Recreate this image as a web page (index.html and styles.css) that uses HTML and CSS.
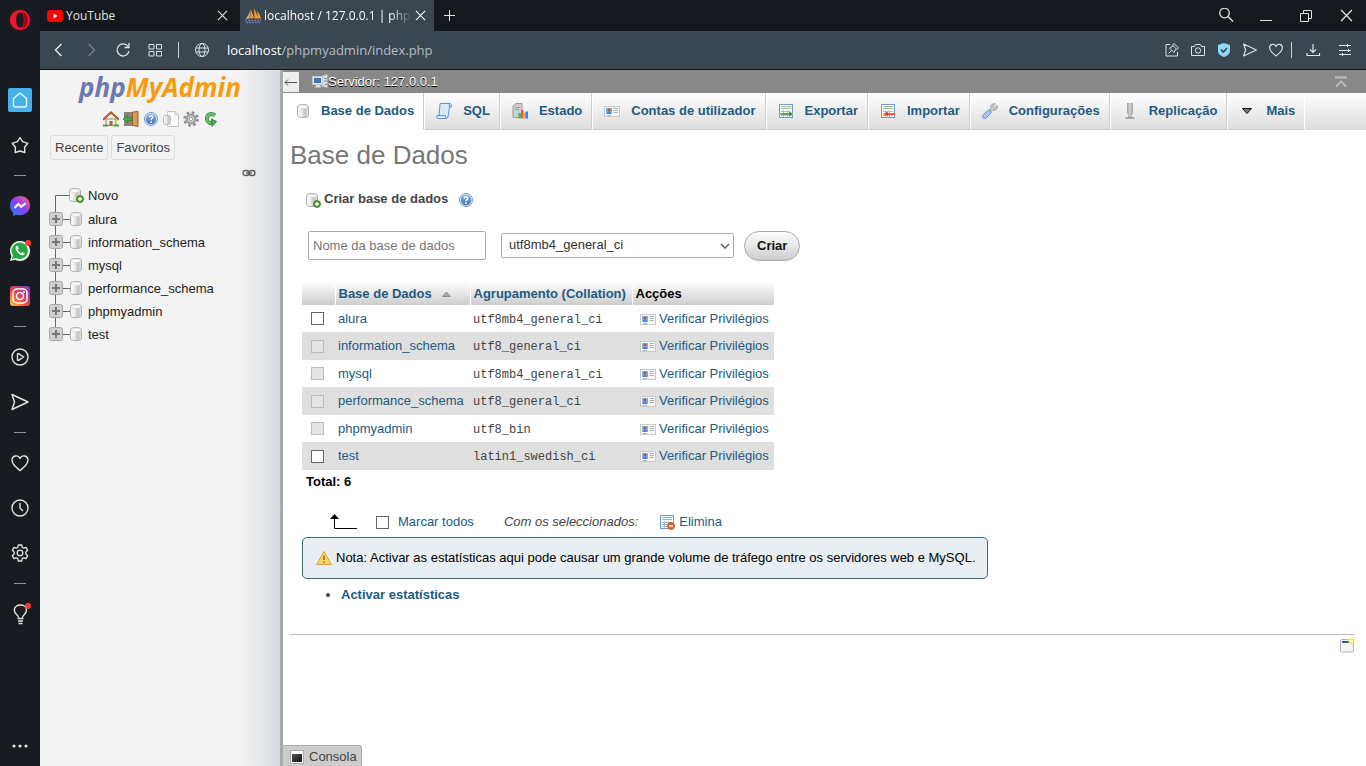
FILE: index.html
```html
<!DOCTYPE html>
<html lang="pt">
<head>
<meta charset="utf-8">
<title>localhost / 127.0.0.1 | phpMyAdmin</title>
<link rel="stylesheet" href="styles.css">
</head>
<body>
<svg class="defs" aria-hidden="true">
  <defs>
    <linearGradient id="g-db" x1="0" x2="1" y1="0" y2="0"><stop offset="0" stop-color="#fff"/><stop offset=".35" stop-color="#eee"/><stop offset=".7" stop-color="#c2c2c2"/><stop offset="1" stop-color="#e6e6e6"/></linearGradient>
    <linearGradient id="g-help" x1="0" x2="0" y1="0" y2="1"><stop offset="0" stop-color="#8ab0de"/><stop offset="1" stop-color="#3f74b8"/></linearGradient>
    <linearGradient id="g-msg" x1="0" x2="1" y1="1" y2="0"><stop offset="0" stop-color="#0a90ff"/><stop offset=".5" stop-color="#8a3cf5"/><stop offset="1" stop-color="#ff6a70"/></linearGradient>
    <linearGradient id="g-ig" x1="0" x2="1" y1="1" y2="0"><stop offset="0" stop-color="#ffc94d"/><stop offset=".4" stop-color="#f4503c"/><stop offset=".7" stop-color="#c72e93"/><stop offset="1" stop-color="#5a48d8"/></linearGradient>
    <linearGradient id="g-con" x1="0" x2="1" y1="0" y2="1"><stop offset="0" stop-color="#555"/><stop offset="1" stop-color="#111"/></linearGradient>
    <symbol id="i-db" viewBox="0 0 16 16"><path d="M2.500 3.500C2.500 .8 13.500 .8 13.500 3.500V12.500C13.500 15.300 2.500 15.300 2.500 12.500Z" fill="url(#g-db)" stroke="#b0b0b0"/><ellipse cx="8" cy="3.800" rx="4.800" ry="1.700" fill="#fbfbfb" stroke="#d0d0d0" stroke-width=".6"/></symbol>
    <symbol id="i-dbnew" viewBox="0 0 16 16"><use href="#i-db" x="-1" y="0" width="16" height="16"/><circle cx="12" cy="12" r="3.500" fill="#5c9f32" stroke="#37761b" stroke-width=".8"/><path d="M12 10v4M10 12h4" stroke="#fff" stroke-width="1.300"/></symbol>
    <symbol id="i-help" viewBox="0 0 16 16"><circle cx="8" cy="8" r="6.500" fill="#dfeaf7" stroke="#6b97cc"/><circle cx="8" cy="8" r="5.200" fill="url(#g-help)"/><path d="M6.200 6.500C6.300 4 9.900 4.200 9.700 6.400C9.600 7.500 8 7.600 8 9.200" fill="none" stroke="#fff" stroke-width="1.500"/><circle cx="8" cy="11.200" r=".9" fill="#fff"/></symbol>
    <symbol id="i-card" viewBox="0 0 16 16"><rect x=".5" y="3.500" width="15" height="10" fill="#f7f7f7" stroke="#c9c9c9"/><rect x="2" y="5" width="6" height="6" fill="#7db0e6"/><circle cx="5" cy="7" r="1.500" fill="#b3571f"/><path d="M3 11c0-3 4-3 4 0z" fill="#3f86d6"/><path d="M9.500 5.500H14M9.500 7.500H14M9.500 9.500H14M3 12.500h4" stroke="#a9b2bd"/></symbol>
    <symbol id="i-sheet" viewBox="0 0 16 16"><rect x="1.500" y="1.500" width="13" height="13" fill="#fff" stroke="#6d9bd0"/><path d="M3 3.500h10M3 5.500h10" stroke="#8fc07a"/><path d="M3 8.500h10M3 10.500h10M3 12.500h10M5.500 7v7M9.500 7v7" stroke="#9dbbe4"/></symbol>
    <symbol id="i-send" viewBox="0 0 20 20"><path d="M2 2.500 18 10 2 17.500 4.500 10Z" fill="none" stroke="currentColor" stroke-width="1.400" stroke-linejoin="round"/></symbol>
    <symbol id="i-heart" viewBox="0 0 20 20"><path d="M10 17.500C6 14 2 11.500 2 7.200C2 2.500 8 1.200 10 5.500C12 1.200 18 2.500 18 7.200C18 11.500 14 14 10 17.500Z" fill="none" stroke="currentColor" stroke-width="1.400" stroke-linejoin="round"/></symbol>
    <symbol id="i-x" viewBox="0 0 12 12"><path d="M1 1 11 11M11 1 1 11" stroke="currentColor" stroke-width="1.200"/></symbol>
    <symbol id="i-plus" viewBox="0 0 22 24"><path d="M6.500 0V24M13 11.500H22" stroke="#666"/><rect x=".5" y="4.500" width="13" height="13" rx="2" fill="#d0d0d0" stroke="#a6a6a6"/><path d="M3 11H11M7 7V15" stroke="#777" stroke-width="2"/></symbol>
    <symbol id="i-plus-last" viewBox="0 0 22 24"><path d="M6.500 0V12M13 11.500H22" stroke="#666"/><rect x=".5" y="4.500" width="13" height="13" rx="2" fill="#d0d0d0" stroke="#a6a6a6"/><path d="M3 11H11M7 7V15" stroke="#777" stroke-width="2"/></symbol>
  </defs>
</svg>
<div class="browser">
  <nav class="rail" aria-label="Opera">
    <button class="rail-logo" aria-label="Menu"><svg width="22" height="22" viewBox="0 0 22 22"><path fill-rule="evenodd" fill="#f0162f" d="M11 1C5 1 1 5.500 1 11S5 21 11 21 21 16.500 21 11 17 1 11 1ZM11 3.500C13.700 3.500 14.800 7 14.800 11S13.700 18.500 11 18.500 7.200 15 7.200 11 8.300 3.500 11 3.500Z"/><path d="M13 2.500C21 5 21 17 13 19.500C16 15 16 7 13 2.500Z" fill="#a70014"/></svg></button>
    <button class="rail-item" aria-label="Início"><svg width="24" height="24" viewBox="0 0 24 24"><rect width="24" height="24" rx="2" fill="#46b1e8"/><path d="M5.500 10.500 12 5 18.500 10.500V17Q18.500 19 16.500 19H7.500Q5.500 19 5.500 17Z" fill="none" stroke="#e8f7ff" stroke-width="1.400" stroke-linejoin="round"/></svg></button>
    <button class="rail-item" aria-label="Favoritos"><svg width="20" height="20" viewBox="0 0 20 20"><path d="M10 2.500 12.600 6.700 17.800 8.300 14.600 12.300 14.800 17.500 10 16 5.200 17.500 5.400 12.300 2.200 8.300 7.400 6.700Z" fill="none" stroke="currentColor" stroke-width="1.400" stroke-linejoin="round"/></svg></button>
    <hr class="rail-sep">
    <button class="rail-item" aria-label="Messenger"><svg width="22" height="22" viewBox="0 0 22 22"><path d="M11 1C5 1 1 5 1 10.500C1 13.800 2.500 16 4.300 17.700V21L7.500 19.800C15 21.500 21 17 21 10.500C21 5 17 1 11 1Z" fill="url(#g-msg)"/><path d="M5.500 13 9.300 9 12.200 11.800 16.500 8.200" fill="none" stroke="#fff" stroke-width="2"/></svg></button>
    <button class="rail-item" aria-label="WhatsApp"><svg width="22" height="22" viewBox="0 0 22 22"><path d="M1 21 2.400 16A10 10 0 1 1 6.200 19.700Z" fill="#e9f5ea"/><path d="M3 19 4 15.500A8.200 8.200 0 1 1 6.800 18Z" fill="#28a745"/><path d="M7.500 6C5.500 8 7 11 9.500 13.300S15 16 15.800 13.500L13.500 12 12.200 13.200C10.500 12.500 9.500 11.500 8.700 9.800L9.800 8.700 8.800 6Z" fill="#fff"/></svg><span class="dot"></span></button>
    <button class="rail-item" aria-label="Instagram"><svg width="20" height="20" viewBox="0 0 20 20"><rect width="20" height="20" rx="3" fill="url(#g-ig)"/><rect x="3" y="3" width="14" height="14" rx="4" fill="none" stroke="#fff" stroke-width="1.500"/><circle cx="10" cy="10" r="3.500" fill="none" stroke="#fff" stroke-width="1.500"/><circle cx="14" cy="6" r="1" fill="#fff"/></svg></button>
    <hr class="rail-sep">
    <button class="rail-item" aria-label="Leitor"><svg width="20" height="20" viewBox="0 0 20 20"><g fill="none" stroke="currentColor" stroke-width="1.400"><circle cx="10" cy="10" r="8"/><path d="M7.500 6.800H9L13.700 10 9 13.200H7.500Z" stroke-linejoin="round"/></g></svg></button>
    <button class="rail-item" aria-label="Flow"><svg width="20" height="20"><use href="#i-send"/></svg></button>
    <hr class="rail-sep">
    <button class="rail-item" aria-label="Marcadores"><svg width="20" height="20"><use href="#i-heart"/></svg></button>
    <button class="rail-item" aria-label="Histórico"><svg width="20" height="20" viewBox="0 0 20 20"><g fill="none" stroke="currentColor" stroke-width="1.400"><circle cx="10" cy="10" r="8"/><path d="M10 5V10L13 13"/></g></svg></button>
    <button class="rail-item" aria-label="Definições"><svg width="20" height="20" viewBox="0 0 20 20"><g fill="none" stroke="currentColor" stroke-width="1.300" stroke-linejoin="round"><path d="M8.300 2H11.700L12.200 4.400 13.700 5.200 16 4.400 17.700 7.300 15.900 9 V11L17.700 12.700 16 15.600 13.700 14.800 12.200 15.600 11.700 18H8.300L7.800 15.600 6.300 14.800 4 15.600 2.300 12.700 4.100 11V9L2.300 7.300 4 4.400 6.300 5.200 7.800 4.400Z"/><circle cx="10" cy="10" r="2.800"/></g></svg></button>
    <hr class="rail-sep">
    <button class="rail-item" aria-label="Dicas"><svg width="20" height="22" viewBox="0 0 20 22"><g fill="none" stroke="currentColor" stroke-width="1.400"><path d="M8.500 14.500C8.500 12 4.300 11 4.300 7C4.300 .3 16.500 .3 16.500 7C16.500 11 12.500 12 12.500 14.500M7.500 15.500H13.500M8 18H13M8.500 20.500H12.500"/></g></svg><span class="dot"></span></button>
    <button class="rail-more" aria-label="Mais"><svg width="18" height="4" viewBox="0 0 18 4"><g fill="currentColor"><circle cx="3" cy="2" r="1.600"/><circle cx="9" cy="2" r="1.600"/><circle cx="15" cy="2" r="1.600"/></g></svg></button>
  </nav>
  <div class="window">
    <header class="tabstrip">
      <div class="btab">
        <svg width="16" height="16" viewBox="0 0 16 16"><rect y="2" width="16" height="12" rx="3" fill="#f00"/><path d="M6.500 5.500 10.500 8 6.500 10.500Z" fill="#fff"/></svg>
        <span class="btab-title">YouTube</span>
        <button class="btab-close" aria-label="Fechar"><svg width="11" height="11"><use href="#i-x"/></svg></button>
      </div>
      <div class="btab btab-on">
        <svg width="16" height="16" viewBox="0 0 16 16"><path d="M5 10.500 5.800 1 9 10ZM9.500 10.500 9 0 13.500 10.500ZM13 10 12 3C14.500 5 15.200 8 16 11Z" fill="#f19a31"/><path d="M.5 11C3 8 4.500 5 5.200 2L4.500 10.500Z" fill="#b5b5b5"/><path d="M0 12.500h16M1 14.500h14" stroke="#7679b4" stroke-width="1.500" stroke-dasharray="2 1"/></svg>
        <span class="btab-title fade">localhost / 127.0.0.1 | phpM</span>
        <button class="btab-close" aria-label="Fechar"><svg width="11" height="11"><use href="#i-x"/></svg></button>
      </div>
      <button class="btab-new" aria-label="Novo separador"><svg width="12" height="12" viewBox="0 0 12 12"><path d="M6.500 0V11M1 5.500H12" stroke="currentColor"/></svg></button>
      <div class="winbtns">
        <button aria-label="Pesquisar"><svg width="16" height="16" viewBox="0 0 16 16"><circle cx="6.500" cy="5" r="4.800" fill="none" stroke="currentColor" stroke-width="1.300"/><path d="M10 8.500 15 13.500" stroke="currentColor" stroke-width="1.400"/></svg></button>
        <button aria-label="Minimizar"><svg width="12" height="12" viewBox="0 0 12 12"><path d="M0 10.500H12" stroke="currentColor"/></svg></button>
        <button aria-label="Restaurar"><svg width="12" height="12" viewBox="0 0 12 12"><path d="M.5 3.500H8.500V11.500H.5ZM3.500 3.500V.5H11.500V8.500H8.500" fill="none" stroke="currentColor"/></svg></button>
        <button aria-label="Fechar"><svg width="13" height="13"><use href="#i-x"/></svg></button>
      </div>
    </header>
    <div class="toolbar">
      <div class="tools-left">
        <button aria-label="Retroceder"><svg width="16" height="16" viewBox="0 0 16 16"><path d="M10.500 2 4.500 8 10.500 14" fill="none" stroke="currentColor" stroke-width="1.500"/></svg></button>
        <button class="dim" aria-label="Avançar"><svg width="16" height="16" viewBox="0 0 16 16"><path d="M5.500 2 11.500 8 5.500 14" fill="none" stroke="currentColor" stroke-width="1.500"/></svg></button>
        <button aria-label="Recarregar"><svg width="16" height="16" viewBox="0 0 16 16"><path d="M13 4.500A6 6 0 1 0 14 9M14 1V5.500H9.500" fill="none" stroke="currentColor" stroke-width="1.300"/></svg></button>
        <button aria-label="Acesso rápido"><svg width="16" height="16" viewBox="0 0 16 16"><path d="M2 2.500H7V7H2ZM9.500 2.500H14.500V7H9.500ZM2 9.500H7V14H2ZM9.500 9.500H14.500V14H9.500Z" fill="none" stroke="currentColor"/></svg></button>
        <span class="vbar"></span>
        <svg width="16" height="16" viewBox="0 0 16 16"><g fill="none" stroke="currentColor"><circle cx="8" cy="8" r="6.500"/><ellipse cx="8" cy="8" rx="3" ry="6.500"/><path d="M2 6H14M2 10H14"/></g></svg>
      </div>
      <div class="url">localhost<span>/phpmyadmin/index.php</span></div>
      <div class="tools-right">
        <button aria-label="Afixar"><svg width="16" height="16" viewBox="0 0 16 16"><g fill="none" stroke="currentColor"><path d="M6 2.500H2V14H13.500V10"/><path d="M8.500 3 13 7.500 14.500 6 10 1.500ZM9 4 5.500 6 10 10.500 12 7M7.500 8.500 4.500 11.500"/></g></svg></button>
        <button aria-label="Instantâneo"><svg width="16" height="16" viewBox="0 0 16 16"><g fill="none" stroke="currentColor"><path d="M1.500 4.500H4.500L5.500 2.500H10.500L11.500 4.500H14.500V13.500H1.500Z"/><circle cx="8" cy="8.500" r="2.700"/></g></svg></button>
        <button aria-label="Proteção"><svg width="16" height="16" viewBox="0 0 16 16"><path d="M8 1 14 3V9C14 12 11 14 8 15C5 14 2 12 2 9V3Z" fill="#8ed7fb"/><path d="M5 7.500 7.300 10 11 6" fill="none" stroke="#31434f" stroke-width="1.600"/></svg></button>
        <button aria-label="Enviar"><svg width="16" height="16"><use href="#i-send"/></svg></button>
        <button aria-label="Marcar"><svg width="16" height="16"><use href="#i-heart"/></svg></button>
        <span class="vbar"></span>
        <button class="wide" aria-label="Transferências"><svg width="16" height="16" viewBox="0 0 16 16"><path d="M8 2V10.500M5 7.500 8 10.500 11 7.500M2 11V13.500H14.500V11" fill="none" stroke="currentColor" stroke-width="1.200"/></svg></button>
        <button class="wide" aria-label="Configuração fácil"><svg width="16" height="16" viewBox="0 0 16 16"><path d="M2 3.500H14M2 8.500H14M2 12.500H14M10.500 2V5M11.500 7V10M5.500 11V14" stroke="currentColor"/></svg></button>
      </div>
    </div>
    <div class="page">
      <aside class="nav">
        <a class="logo" href="#"><span>php</span>MyAdmin</a>
        <div class="nav-icons">
          <a href="#" aria-label="Início"><svg width="16" height="16" viewBox="0 0 16 16"><path d="M3 8H13V14.500H3Z" fill="#f3ead8" stroke="#9a8b72"/><path d="M6.500 10h3v4.500h-3z" fill="#9b6b3c"/><path d="M0 8.800 8 1.500 16 8.800" fill="none" stroke="#a9622e" stroke-width="2.200"/><path d="M0 14.500h5M11 14.500h5" stroke="#5b9b38" stroke-width="2"/></svg></a>
          <a href="#" aria-label="Sair"><svg width="16" height="16" viewBox="0 0 16 16"><path d="M1 1H10V15H1Z" fill="#8a8578"/><path d="M9.500 1 15 .5V15.500L9.500 14.500Z" fill="#d69a56" stroke="#96602e"/><path d="M0 8 4.500 4V6.500H9V9.500H4.500V12Z" fill="#49a847" stroke="#267a27" stroke-width=".6"/></svg></a>
          <a href="#" aria-label="Documentação"><svg width="16" height="16"><use href="#i-help"/></svg></a>
          <a href="#" aria-label="Documentação SQL"><svg width="16" height="16" viewBox="0 0 16 16"><path d="M4.500 .5H12L15.500 4V15.500H4.500Z" fill="#fcfcfc" stroke="#c5c5c5"/><path d="M12 .5V4H15.500" fill="none" stroke="#c5c5c5"/><rect x=".5" y="4.500" width="7" height="9" rx="2" fill="url(#g-db)" stroke="#bbb"/></svg></a>
          <a href="#" aria-label="Configurações"><svg width="16" height="16" viewBox="0 0 16 16"><circle cx="8" cy="8" r="6.500" fill="none" stroke="#8a8a8a" stroke-width="2.500" stroke-dasharray="2.550 2.550"/><circle cx="8" cy="8" r="4.300" fill="#ddd" stroke="#a1a1a1" stroke-width="2.500"/><circle cx="8" cy="8" r="1.800" fill="#f3f3f3" stroke="#999"/></svg></a>
          <a href="#" aria-label="Recarregar"><svg width="16" height="16" viewBox="0 0 16 16"><path d="M12 4.500C8 1 3.500 4 4 8.500C4.500 11.500 7 12.500 9.500 11.500" fill="none" stroke="#36883a" stroke-width="4"/><path d="M12 4.500C8 1 3.500 4 4 8.500C4.500 11.500 7 12.500 9.500 11.500" fill="none" stroke="#6dc06b" stroke-width="2.400"/><path d="M8.500 8 13.500 10.500 9 15.500Z" fill="#50aa50" stroke="#36883a"/></svg></a>
        </div>
        <div class="nav-btns"><button>Recente</button><button>Favoritos</button></div>
        <a class="nav-link" href="#" aria-label="Ligar ao painel principal"><svg width="14" height="8" viewBox="0 0 14 8"><g fill="none" stroke="#5f5f5f" stroke-width="1.400"><rect x="1" y="1.500" width="6" height="5" rx="2.500"/><rect x="7" y="1.500" width="6" height="5" rx="2.500"/><path d="M4 4H10"/></g></svg></a>
        <ul class="tree">
          <li><svg class="twig" viewBox="0 0 22 24"><path d="M22 11.500H6.500V24" fill="none" stroke="#666"/></svg><svg class="ico"><use href="#i-dbnew"/></svg><a href="#">Novo</a></li>
          <li><svg class="twig"><use href="#i-plus"/></svg><svg class="ico"><use href="#i-db"/></svg><a href="#">alura</a></li>
          <li><svg class="twig"><use href="#i-plus"/></svg><svg class="ico"><use href="#i-db"/></svg><a href="#">information_schema</a></li>
          <li><svg class="twig"><use href="#i-plus"/></svg><svg class="ico"><use href="#i-db"/></svg><a href="#">mysql</a></li>
          <li><svg class="twig"><use href="#i-plus"/></svg><svg class="ico"><use href="#i-db"/></svg><a href="#">performance_schema</a></li>
          <li><svg class="twig"><use href="#i-plus"/></svg><svg class="ico"><use href="#i-db"/></svg><a href="#">phpmyadmin</a></li>
          <li><svg class="twig"><use href="#i-plus-last"/></svg><svg class="ico"><use href="#i-db"/></svg><a href="#">test</a></li>
        </ul>
      </aside>
      <div class="main">
        <div class="server">
          <button class="collapse" aria-label="Ocultar painel"><svg width="14" height="8" viewBox="0 0 14 8"><path d="M1 4.500H13M4 1.500 1 4.500 4 7.500" fill="none" stroke="#555"/></svg></button>
          <svg class="server-ico" viewBox="0 0 16 16"><path d="M9.500 2 14.500 .5H15.500V13.500L9.500 12.500Z" fill="#ddd" stroke="#aaa"/><path d="M12 4.500h3M12 7h3" stroke="#7a9a8a"/><path d="M13 10.500h2" stroke="#4fae3c"/><rect x=".5" y="2.500" width="10" height="8" fill="#dfe3e8" stroke="#c2c6cc"/><rect x="2" y="4" width="7" height="5" fill="#4272b8"/><path d="M4 11H8L9 13.500H3Z" fill="#ddd"/></svg>
          <a href="#">Servidor: 127.0.0.1</a>
          <button class="totop" aria-label="Topo"><svg width="12" height="12" viewBox="0 0 12 12"><path d="M0 1.500H12M1 10.500 6 5.500 11 10.500" fill="none" stroke="#bbb" stroke-width="2"/></svg></button>
        </div>
        <nav class="tabs">
          <a class="on" href="#"><svg class="ico"><use href="#i-db"/></svg>Base de Dados</a>
          <a href="#"><svg class="ico" viewBox="0 0 16 16"><path d="M4 1.500Q3 1 4.500 .5H14Q16 1 15.500 4H13.500L12 14Q11.500 15.500 10 15.500H1.500Q0 15 1 12.500H3Z" fill="#d7e9fb" stroke="#5d94d1"/><path d="M3 12.500H9.500Q9 15 10.500 15.500M13.500 4Q12.500 2 14 .5" fill="none" stroke="#5d94d1"/></svg>SQL</a>
          <a href="#"><svg class="ico" viewBox="0 0 16 16"><path d="M1 3 4 .5H10V13L7 14.500H1Z" fill="#cfcfcf" stroke="#9c9c9c"/><path d="M3 4.500h5M3 6.500h4" stroke="#999"/><path d="M6.500 10h2.500v5.500H6.500z" fill="#57ad4a"/><path d="M9 7h2.500v8.500H9z" fill="#e8603c"/><path d="M11.500 10H13.500v5.500H11.500z" fill="#f2a05a"/><path d="M13.500 8.500H16v7H13.500z" fill="#3d7fe0"/></svg>Estado</a>
          <a href="#"><svg class="ico"><use href="#i-card"/></svg>Contas de utilizador</a>
          <a href="#"><svg class="ico" viewBox="0 0 16 16"><use href="#i-sheet" width="16" height="16"/><path d="M2 10H11V8L15.500 11 11 14V12H2Z" fill="#3d8c31" stroke="#fff" stroke-width=".4"/></svg>Exportar</a>
          <a href="#"><svg class="ico" viewBox="0 0 16 16"><use href="#i-sheet" width="16" height="16"/><path d="M15.500 10H8V8L3 11 8 14V12H15.500Z" fill="#e33d38" stroke="#fff" stroke-width=".4"/></svg>Importar</a>
          <a href="#"><svg class="ico" viewBox="0 0 16 16"><path d="M13.500 .8 11 3.500 12.500 5 15.300 2.500C16 6 13 8 10.500 7L9 8.500 7.500 7 8.700 5.500C8 2.500 10.500 0 13.500 .8Z" fill="#ccc" stroke="#8f8f8f" stroke-width=".8"/><path d="M6.800 6.800 9.500 9.300 4.500 14.800C2 17-1 14 1 12Z" fill="#a8c4ef" stroke="#6d92d2"/></svg>Configurações</a>
          <a href="#"><svg class="ico" viewBox="0 0 16 16"><path d="M5.500 0V10L7 12.500V0ZM10.500 0V10L9 12.500V0Z" fill="#ccc" stroke="#999" stroke-width=".8"/><path d="M3.500 15h9" stroke="#aaa" stroke-width="2"/><path d="M6 14h4" stroke="#888"/></svg>Replicação</a>
          <a href="#"><svg class="ico" viewBox="0 0 16 16"><path d="M3.500 5.500H12.500L8 10.500Z" fill="#777" stroke="#111"/></svg>Mais</a>
        </nav>
        <main class="content">
          <h1>Base de Dados</h1>
          <form class="create">
            <div class="create-title"><svg class="ico"><use href="#i-dbnew"/></svg><label for="newdb">Criar base de dados</label><a href="#" aria-label="Ajuda"><svg class="ico"><use href="#i-help"/></svg></a></div>
            <div class="create-row">
              <input id="newdb" type="text" placeholder="Nome da base de dados">
              <div class="pick">
                <select aria-label="Agrupamento"><option>utf8mb4_general_ci</option></select>
                <svg width="10" height="6" viewBox="0 0 10 6"><path d="M1 1 5 5 9 1" fill="none" stroke="#666" stroke-width="1.600"/></svg>
              </div>
              <button type="button">Criar</button>
            </div>
          </form>
          <table class="dbs">
            <colgroup><col class="c1"><col class="c2"><col class="c3"><col class="c4"></colgroup>
            <thead><tr><th></th><th><a href="#">Base de Dados<svg width="9" height="6" viewBox="0 0 9 6"><path d="M.5 5.500H8.500L4.500 1Z" fill="#aaa" stroke="#777" stroke-width=".7"/></svg></a></th><th><a href="#">Agrupamento (Collation)</a></th><th>Acções</th></tr></thead>
            <tbody>
              <tr><td><input type="checkbox" aria-label="alura"></td><td><a href="#">alura</a></td><td class="mono">utf8mb4_general_ci</td><td><a class="act" href="#"><svg class="ico"><use href="#i-card"/></svg>Verificar Privilégios</a></td></tr>
              <tr><td><input type="checkbox" disabled aria-label="information_schema"></td><td><a href="#">information_schema</a></td><td class="mono">utf8_general_ci</td><td><a class="act" href="#"><svg class="ico"><use href="#i-card"/></svg>Verificar Privilégios</a></td></tr>
              <tr><td><input type="checkbox" disabled aria-label="mysql"></td><td><a href="#">mysql</a></td><td class="mono">utf8mb4_general_ci</td><td><a class="act" href="#"><svg class="ico"><use href="#i-card"/></svg>Verificar Privilégios</a></td></tr>
              <tr><td><input type="checkbox" disabled aria-label="performance_schema"></td><td><a href="#">performance_schema</a></td><td class="mono">utf8_general_ci</td><td><a class="act" href="#"><svg class="ico"><use href="#i-card"/></svg>Verificar Privilégios</a></td></tr>
              <tr><td><input type="checkbox" disabled aria-label="phpmyadmin"></td><td><a href="#">phpmyadmin</a></td><td class="mono">utf8_bin</td><td><a class="act" href="#"><svg class="ico"><use href="#i-card"/></svg>Verificar Privilégios</a></td></tr>
              <tr><td><input type="checkbox" aria-label="test"></td><td><a href="#">test</a></td><td class="mono">latin1_swedish_ci</td><td><a class="act" href="#"><svg class="ico"><use href="#i-card"/></svg>Verificar Privilégios</a></td></tr>
            </tbody>
          </table>
          <p class="total">Total: 6</p>
          <div class="bulk">
            <svg width="28" height="16" viewBox="0 0 28 16"><path d="M5.500 3V14.500H28" fill="none" stroke="#000"/><path d="M5.500 0 10 5H1Z"/></svg>
            <input id="all" type="checkbox"><label for="all">Marcar todos</label>
            <em>Com os seleccionados:</em>
            <a href="#"><svg class="ico" viewBox="0 0 16 16"><use href="#i-sheet" width="16" height="16"/><circle cx="12" cy="12" r="3.500" fill="#e56a1e" stroke="#b24a10" stroke-width=".7"/><path d="M10 12h4" stroke="#fff" stroke-width="1.400"/></svg>Elimina</a>
          </div>
          <div class="note"><svg class="ico" viewBox="0 0 16 16"><path d="M8 1.500 15.300 14.500H.7Z" fill="#fbd864" stroke="#dfa02c" stroke-linejoin="round"/><path d="M8 5.500V10M8 11.500V13" stroke="#8d6a1c" stroke-width="1.500"/></svg><span>Nota: Activar as estatísticas aqui pode causar um grande volume de tráfego entre os servidores web e MySQL.</span></div>
          <ul class="stats"><li><a href="#">Activar estatísticas</a></li></ul>
          <div class="foot"><a href="#" aria-label="Abrir nova janela"><svg class="ico" viewBox="0 0 16 16"><rect x="1.500" y="2.500" width="13" height="12.500" rx="1" fill="#f4f4f4" stroke="#b5b5b0"/><path d="M3 5H11" stroke="#2c5a9e" stroke-width="2"/><circle cx="12.500" cy="4" r="2.300" fill="#fffbd0" stroke="#f7ec3a" stroke-width="1.500"/></svg></a></div>
        </main>
        <button class="console"><svg width="14" height="14" viewBox="0 0 14 14"><rect x=".5" y=".5" width="13" height="13" fill="#fff" stroke="#aaa"/><rect x="2" y="4" width="10" height="8" fill="url(#g-con)"/></svg>Consola</button>
      </div>
    </div>
  </div>
</div>
</body>
</html>
```
FILE: styles.css
```css
* { box-sizing: border-box; }
body { margin: 0; font: 13px/16px "Liberation Sans", Arial, sans-serif; color: #444; background: #fff; }
a { color: #235a81; text-decoration: none; }
button { font: inherit; color: inherit; background: none; border: 0; padding: 0; }
svg { display: block; flex: none; }
.defs { position: absolute; width: 0; height: 0; }
.ico { width: 16px; height: 16px; }

.browser { display: flex; min-height: 100vh; }

.rail { flex: none; width: 40px; display: flex; flex-direction: column; align-items: center; background: #181b20; color: #dfe3e6; }
.rail-logo { height: 40px; margin-bottom: 37px; }
.rail-item { position: relative; height: 45px; width: 40px; display: flex; align-items: center; justify-content: center; }
.rail-sep { width: 12px; margin: 8px 0 7px; border: 0; height: 1px; background: #7f93a2; }
.dot { position: absolute; right: 9px; top: 12px; width: 6px; height: 6px; border-radius: 50%; background: #ff3b30; }
.rail-more { margin-top: auto; padding: 18px 0; }

.window { flex: 1; min-width: 0; display: flex; flex-direction: column; }
.tabstrip { display: flex; height: 31px; background: #15181c; color: #dfe3e6; font: 12px/16px "Open Sans", sans-serif; }
.btab { display: flex; align-items: center; gap: 3px; width: 200px; padding: 0 12px 0 7px; }
.btab-on { width: 194px; padding: 0 8px 0 5px; background: #3a4650; color: #fff; }
.btab-title { flex: 1; min-width: 0; white-space: nowrap; }
.fade { -webkit-mask-image: linear-gradient(90deg, #000 85%, transparent); mask-image: linear-gradient(90deg, #000 85%, transparent); }
.btab-new { padding: 0 9px; }
.winbtns { display: flex; margin-left: auto; }
.winbtns button { width: 40px; display: flex; align-items: center; justify-content: center; }

.toolbar { display: flex; align-items: center; height: 39px; background: #3a4650; color: #dfe3e6; border-bottom: 1px solid #14171a; }
.tools-left { display: flex; align-items: center; gap: 16px; padding-left: 11px; }
.tools-left .vbar { margin: 0 -1px; }
.dim { color: #707c86; }
.vbar { width: 1px; height: 16px; background: #cbd2d7; }
.url { flex: 1; padding-left: 17px; font: 13px/18px "Open Sans", sans-serif; color: #fff; }
.url span { color: #b4bfc8; }
.tools-right { display: flex; align-items: center; gap: 10px; padding-right: 13px; }
.tools-right .vbar { margin: 0 3px 0 -3px; }
.wide + .wide { margin-left: 6px; }

.page { flex: 1; display: flex; }
.nav { flex: none; width: 243px; border-right: 3px solid #aaa; background: linear-gradient(90deg, #f3f3f3 200px, #d7dbdf 240px); }
.logo { display: block; text-align: center; font: italic 700 26px/34px "Open Sans", sans-serif; color: #f89c0e; }
.logo span { color: #6c78af; }
.nav-icons { display: flex; gap: 4px; padding: 7px 0 0 63px; }
.nav-btns { display: flex; gap: 3px; padding: 8px 0 0 10px; }
.nav-btns button { height: 25px; padding: 0 4px; border: 1px solid #ddd; border-radius: 3px; }
.nav-link { display: flex; justify-content: flex-end; padding: 9px 24px 0 0; }
.tree { list-style: none; margin: 7px 0 0; padding: 0 0 0 9px; }
.tree li { display: flex; align-items: center; height: 23px; }
.tree li:first-child { height: 24px; }
.tree .ico { margin-bottom: 2px; }
.twig { width: 22px; height: 24px; margin-right: -3px; }
.tree a { margin-left: 4px; color: #222; }

.main { flex: 1; min-width: 0; display: flex; flex-direction: column; background: #fff; }
.server { display: flex; align-items: center; height: 23px; background: #888; }
.collapse { width: 16px; height: 20px; display: flex; align-items: center; justify-content: center; background: #eee; }
.server-ico { width: 16px; height: 16px; margin-left: 13px; }
.server a { color: #fff; text-shadow: 0 1px 0 #000; }
.totop { margin-left: auto; padding-right: 19px; }
.tabs { display: flex; height: 37px; background: linear-gradient(#fff, #dcdcdc); }
.tabs a { display: flex; align-items: center; gap: 11px; padding: 0 9px 0 11px; font-weight: 700; white-space: nowrap; border-left: 1px solid #fff; border-right: 1px solid #ccc; border-bottom: 1px solid #ccc; }
.tabs .on { gap: 10px; background: #fff; border-bottom-color: #fff; }
.tabs a:last-child { border-right-color: #fff; }

.content { padding: 8px 11px 0 7px; }
h1 { margin: 0; font-size: 26px; line-height: 34px; font-weight: 400; color: #777; }
.create { padding: 17px 0 0 15px; }
.create-title { display: flex; align-items: center; gap: 3px; font-weight: 700; }
.create-title a { margin-left: 7px; }
.create-title .ico { margin-top: 3px; }
.create-row { display: flex; align-items: center; padding: 21px 0 0 3px; }
.create-row input { width: 178px; height: 29px; padding: 0 4px; border: 1px solid #aaa; border-radius: 2px; font: inherit; }
.create-row input::placeholder { color: #777; }
.pick { position: relative; width: 233px; margin: 0 10px 0 15px; }
.pick select { appearance: none; display: block; width: 100%; height: 25px; padding: 0 24px 0 7px; border: 1px solid #aaa; border-radius: 2px; font: inherit; color: #333; background: #fff; }
.pick svg { position: absolute; right: 4px; top: 10px; pointer-events: none; }
.create-row button { height: 30px; margin-top: 2px; padding: 0 12px; border: 1px solid #aaa; border-radius: 16px; font-weight: 700; color: #111; background: linear-gradient(#fff, #ccc); }

.dbs { margin: 21px 0 0 12px; border-collapse: collapse; table-layout: fixed; width: 472px; }
.c1 { width: 33px; }
.c2 { width: 135px; }
.c3 { width: 162px; }
.c4 { width: 142px; }
.dbs th { height: 23px; padding: 0 3px; text-align: left; color: #000; white-space: nowrap; border-right: 1px solid #fff; background: linear-gradient(#fff, #ccc); }
.dbs th:last-child { border-right: 0; }
.dbs th a { display: flex; align-items: center; gap: 10px; }
.dbs td { height: 27px; padding: 0 0 0 3px; white-space: nowrap; }
.dbs td:first-child { padding-left: 9px; }
.dbs td:last-child { padding-left: 8px; }
.dbs tr:nth-child(even) td { height: 28px; background: #dfdfdf; }
.dbs .mono { padding-top: 2px; font: 12px/16px "Liberation Mono", monospace; }
.act { display: flex; align-items: center; gap: 3px; }
input[type="checkbox"] { appearance: none; display: block; width: 13px; height: 13px; margin: 0; border: 1px solid #666; background: #fff; }
input[type="checkbox"]:disabled { border-color: #bbb; background: #e4e4e4; }
.total { margin: 4px 0 0 16px; font-weight: 700; color: #000; }
.bulk { display: flex; align-items: center; padding: 24px 0 0 39px; color: #235a81; }
.bulk input { margin: 0 9px 0 19px; }
.bulk em { margin: 0 21px 0 30px; color: #444; }
.bulk a { display: flex; align-items: center; gap: 4px; }
.note { display: flex; align-items: center; gap: 4px; width: fit-content; margin: 7px 0 0 12px; padding: 12px 11px 12px 13px; border: 1px solid #3a6c7e; border-radius: 5px; color: #000; background: #e8eef1; }
.stats { margin: 8px 0 0; padding: 0 0 0 51px; font-weight: 700; }
.foot { display: flex; justify-content: flex-end; margin-top: 31px; padding-top: 2px; border-top: 1px solid #bbb; }
.console { display: flex; align-items: center; gap: 5px; align-self: flex-start; height: 21px; margin-top: auto; padding: 2px 4px 0 7px; border: 1px solid #aaa; border-left: 0; border-bottom: 0; border-radius: 0 3px 0 0; background: #ccc; }
```
